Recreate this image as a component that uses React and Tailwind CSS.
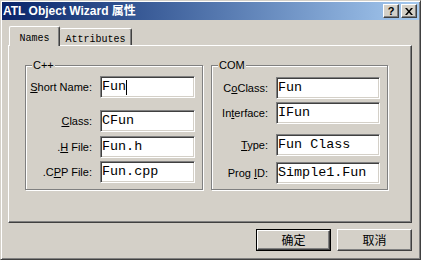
import React from "react";

const sans = { fontFamily: '"Liberation Sans", "Noto Sans CJK SC", sans-serif' };
const mono = { fontFamily: '"Liberation Mono", "Noto Sans CJK SC", monospace' };
const cjk = { fontFamily: '"Noto Sans CJK SC", "Liberation Sans", sans-serif' };

function Field({ label, value, labelW, inputW, mt, cursor }) {
  return (
    <div className="flex items-center h-[22px]" style={{ marginTop: mt }}>
      <div className="text-right text-[11px] text-black leading-none" style={{ ...sans, width: labelW }}>
        {label}
      </div>
      <div
        className="ml-[8px] h-[22px] bg-white border border-t-[#808080] border-l-[#808080] border-r-white border-b-white shadow-[inset_1px_1px_0_#404040,inset_-1px_-1px_0_#D4D0C8] flex items-center pl-[1px]"
        style={{ width: inputW }}
      >
        <span className="text-[13.4px] leading-none text-black whitespace-pre" style={mono}>
          {value}
        </span>
        {cursor && <span className="w-px h-[15px] bg-black" />}
      </div>
    </div>
  );
}

function Group({ title, children, width }) {
  return (
    <div
      className="relative h-[125px] border border-[#808080] shadow-[1px_1px_0_#fff,inset_1px_1px_0_#fff]"
      style={{ width }}
    >
      <div className="absolute left-[6px] top-[-7px] bg-[#D4D0C8] px-[1px] text-[11px] leading-[12px] text-black" style={sans}>
        {title}
      </div>
      {children}
    </div>
  );
}

const U = ({ children }) => <span className="underline underline-offset-[1px]">{children}</span>;

export default function App() {
  return (
    <div className="w-[421px] h-[260px] bg-[#D4D0C8] border border-t-[#D4D0C8] border-l-[#D4D0C8] border-r-[#404040] border-b-[#404040] shadow-[inset_1px_1px_0_#fff,inset_-1px_-1px_0_#808080] p-[1px] flex flex-col overflow-hidden">
      {/* Title bar */}
      <div className="h-[18px] flex items-center bg-gradient-to-r from-[#0A246A] to-[#A6CAF0] pl-[1px] pr-[2px]">
        <span className="text-white font-bold text-[12px] leading-none" style={sans}>
          ATL Object Wizard 属性
        </span>
        <div className="ml-auto flex gap-[2px]">
          <div className="w-[16px] h-[14px] bg-[#D4D0C8] border border-t-white border-l-white border-r-[#404040] border-b-[#404040] shadow-[inset_-1px_-1px_0_#808080] flex items-center justify-center">
            <span className="text-[11px] font-bold leading-none text-black" style={sans}>?</span>
          </div>
          <div className="w-[16px] h-[14px] bg-[#D4D0C8] border border-t-white border-l-white border-r-[#404040] border-b-[#404040] shadow-[inset_-1px_-1px_0_#808080] flex items-center justify-center">
            <svg width="8" height="7" viewBox="0 0 8 7">
              <path d="M0 0h2l2 2.5L6 0h2L5 3.5 8 7H6L4 4.5 2 7H0l3-3.5z" fill="#000" />
            </svg>
          </div>
        </div>
      </div>

      {/* Tabs */}
      <div className="mt-[6px] ml-[7px] flex items-end h-[20px] relative z-10 -mb-[1px]">
        <div className="w-[51px] h-[20px] bg-[#D4D0C8] border-t border-l border-t-white border-l-white border-r border-r-[#404040] shadow-[inset_-1px_0_0_#808080] rounded-t-[2px] flex items-start justify-center pt-[7px]">
          <span className="text-[10px] leading-none text-black" style={mono}>Names</span>
        </div>
        <div className="w-[72px] h-[17px] bg-[#D4D0C8] border-t border-t-white border-r border-r-[#404040] shadow-[inset_-1px_0_0_#808080] rounded-t-[2px] flex items-start justify-center pt-[6px] mb-[1px]">
          <span className="text-[10px] leading-none text-black" style={mono}>Attributes</span>
        </div>
      </div>

      {/* Panel */}
      <div className="ml-[6px] w-[404px] h-[178px] border border-t-white border-l-white border-r-[#404040] border-b-[#404040] shadow-[inset_-1px_-1px_0_#808080] flex gap-[8px] pl-[16px] pt-[19px]">
        <Group title="C++" width={178}>
          <Field label={<><U>S</U>hort Name:</>} value="Fun" labelW={66} inputW={95} mt={10} cursor />
          <Field label={<><U>C</U>lass:</>} value="CFun" labelW={66} inputW={95} mt={12} />
          <Field label={<>.<U>H</U> File:</>} value="Fun.h" labelW={66} inputW={95} mt={4} />
          <Field label={<>.C<U>P</U>P File:</>} value="Fun.cpp" labelW={66} inputW={95} mt={3} />
        </Group>
        <Group title="COM" width={177}>
          <Field label={<>C<U>o</U>Class:</>} value="Fun" labelW={56} inputW={104} mt={11} />
          <Field label={<>In<U>t</U>erface:</>} value="IFun" labelW={56} inputW={104} mt={3} />
          <Field label={<><U>T</U>ype:</>} value="Fun Class" labelW={56} inputW={104} mt={10} />
          <Field label={<>Prog <U>I</U>D:</>} value="Simple1.Fun" labelW={56} inputW={104} mt={6} />
        </Group>
      </div>

      {/* Buttons */}
      <div className="mt-[6px] ml-[254px] flex gap-[6px]">
        <div className="w-[75px] h-[22px] border border-black">
          <div className="w-full h-full bg-[#D4D0C8] border border-t-white border-l-white border-r-[#404040] border-b-[#404040] shadow-[inset_-1px_-1px_0_#808080] flex items-center justify-center">
            <span className="text-[12px] leading-none text-black" style={cjk}>确定</span>
          </div>
        </div>
        <div className="w-[75px] h-[22px] bg-[#D4D0C8] border border-t-white border-l-white border-r-[#404040] border-b-[#404040] shadow-[inset_-1px_-1px_0_#808080] flex items-center justify-center">
          <span className="text-[12px] leading-none text-black" style={cjk}>取消</span>
        </div>
      </div>
    </div>
  );
}
